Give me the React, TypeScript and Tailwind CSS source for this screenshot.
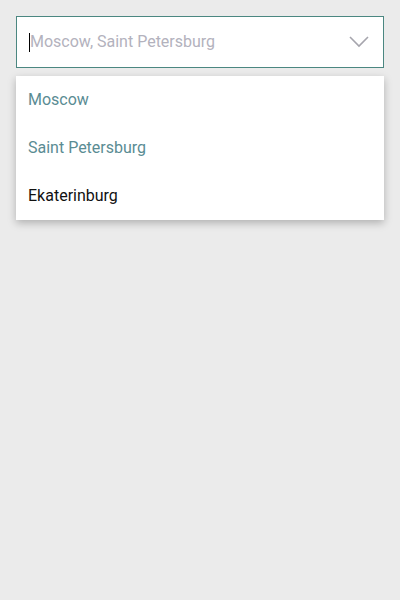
import { useState } from "react";

const cities = ["Moscow", "Saint Petersburg", "Ekaterinburg"];

export default function App() {
  const [selected] = useState(["Moscow", "Saint Petersburg"]);

  return (
    <div className="min-h-screen bg-[#ebebeb] p-4 font-['Roboto',sans-serif]">
      <div className="flex h-[52px] items-center border border-[#4b8781] bg-white pl-3 pr-[14px]">
        <div className="flex flex-1 items-center">
          <span className="h-[19px] w-px bg-black" />
          <span className="text-base text-[#b3b2bd]">{selected.join(", ")}</span>
        </div>
        <svg width="20" height="12" viewBox="0 0 20 12" fill="none">
          <path d="M1 1l9 9 9-9" stroke="#a6a5ad" strokeWidth="1.6" />
        </svg>
      </div>
      <ul className="mt-2 bg-white shadow-[0_3px_8px_rgba(0,0,0,0.25)]">
        {cities.map((c) => (
          <li
            key={c}
            className={
              "flex h-12 items-center px-3 text-base " +
              (selected.includes(c) ? "text-[#5a8c93]" : "text-[#111111]")
            }
          >
            {c}
          </li>
        ))}
      </ul>
    </div>
  );
}
